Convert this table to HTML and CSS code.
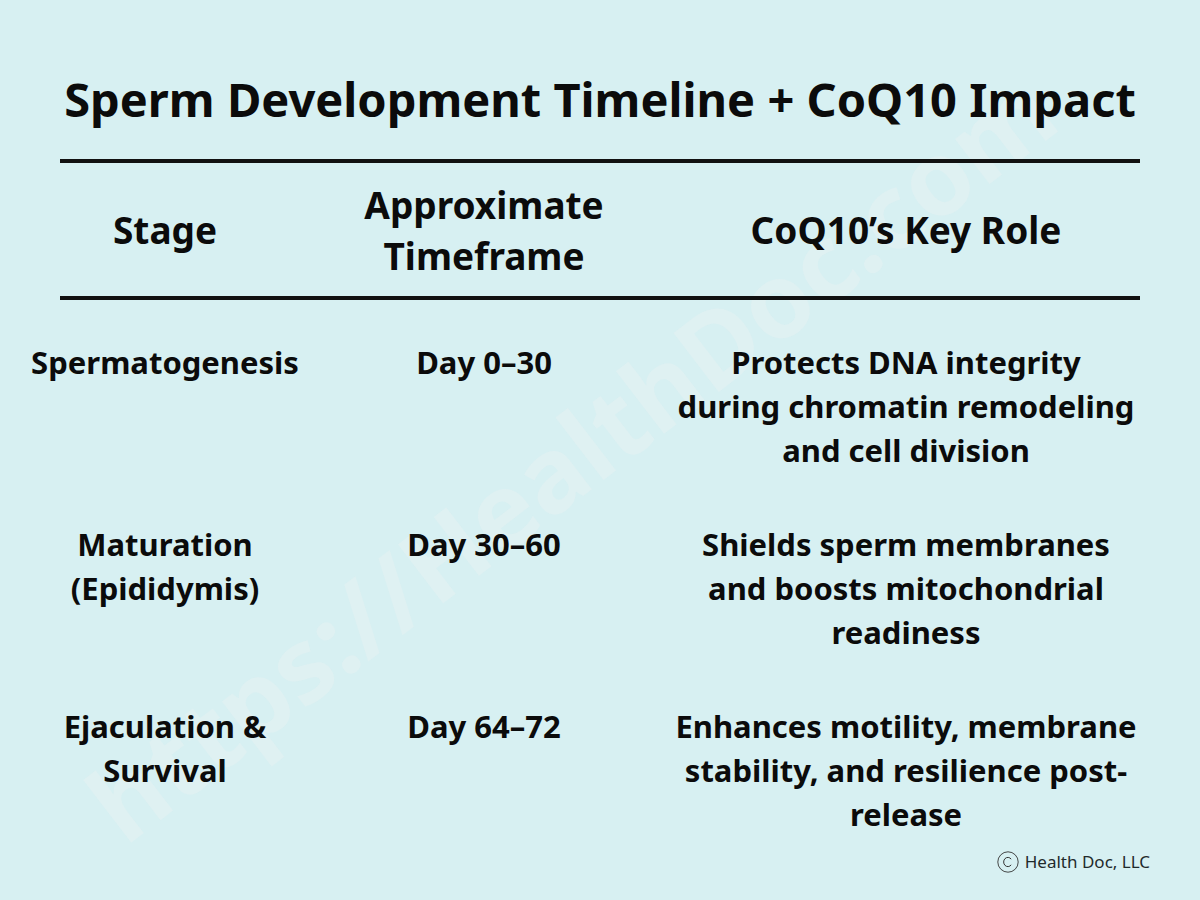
FILE: index.html
```html
<!DOCTYPE html>
<html lang="en">
<head>
<meta charset="utf-8">
<title>Sperm Development Timeline + CoQ10 Impact</title>
<link rel="stylesheet" href="styles.css">
</head>
<body>
<div class="page">
  <div class="watermark">https://HealthDoc.com</div>
  <h1 class="title">Sperm Development Timeline + CoQ10 Impact</h1>
  <div class="rule"></div>
  <div class="row head">
    <div class="cell c1">Stage</div>
    <div class="cell c2">Approximate<br>Timeframe</div>
    <div class="cell c3">CoQ10’s Key Role</div>
  </div>
  <div class="rule"></div>
  <div class="body">
    <div class="row">
      <div class="cell c1">Spermatogenesis</div>
      <div class="cell c2">Day 0–30</div>
      <div class="cell c3">Protects DNA integrity<br>during chromatin remodeling<br>and cell division</div>
    </div>
    <div class="row">
      <div class="cell c1">Maturation<br>(Epididymis)</div>
      <div class="cell c2">Day 30–60</div>
      <div class="cell c3">Shields sperm membranes<br>and boosts mitochondrial<br>readiness</div>
    </div>
    <div class="row">
      <div class="cell c1">Ejaculation &amp;<br>Survival</div>
      <div class="cell c2">Day 64–72</div>
      <div class="cell c3">Enhances motility, membrane<br>stability, and resilience post-<br>release</div>
    </div>
  </div>
  <div class="credit">
    <svg class="copy" width="22" height="22" viewBox="0 0 22 22"><circle cx="11" cy="11" r="10.2" fill="none" stroke="#333" stroke-width="0.9"/><path d="M14.2 8.2 A4.2 4.6 0 1 0 14.2 13.8" fill="none" stroke="#333" stroke-width="1"/></svg>
    <span>Health Doc, LLC</span>
  </div>
</div>
</body>
</html>
```
FILE: styles.css
```css
html, body {
  margin: 0;
  padding: 0;
}
body {
  background: #d7f0f2;
  font-family: "Noto Sans", "Open Sans", sans-serif;
  color: #0b0b0b;
}
.page {
  position: relative;
  width: 1200px;
  height: 900px;
  overflow: hidden;
  display: flex;
  flex-direction: column;
}
.watermark {
  position: absolute;
  left: 570px;
  top: 455px;
  transform: translate(-50%, -50%) rotate(-37.5deg);
  font-size: 104px;
  font-weight: 700;
  white-space: nowrap;
  color: rgba(240, 242, 242, 0.32);
  pointer-events: none;
}
.title {
  margin: 68px 0 0;
  font-size: 47px;
  font-weight: 700;
  line-height: 62px;
  text-align: center;
  letter-spacing: 0;
  position: relative;
}
.rule {
  height: 4px;
  background: #111;
  margin: 0 60px;
  position: relative;
}
.title + .rule {
  margin-top: 29px;
}
.row {
  display: grid;
  grid-template-columns: 270px 368px 476px;
  padding-left: 30px;
  position: relative;
}
.cell {
  text-align: center;
  white-space: nowrap;
  font-weight: 700;
}
.head {
  height: 133px;
  align-items: center;
}
.head .cell {
  font-size: 37px;
  line-height: 51px;
}
.body {
  padding-top: 40px;
  display: flex;
  flex-direction: column;
  gap: 50px;
}
.body .cell {
  font-size: 31px;
  line-height: 44px;
}
.credit {
  position: absolute;
  right: 50px;
  top: 850px;
  display: flex;
  align-items: center;
  gap: 6px;
  font-family: "Noto Sans", sans-serif;
  font-size: 17px;
  color: #1f2a2c;
}
.copy {
  display: block;
}
```
